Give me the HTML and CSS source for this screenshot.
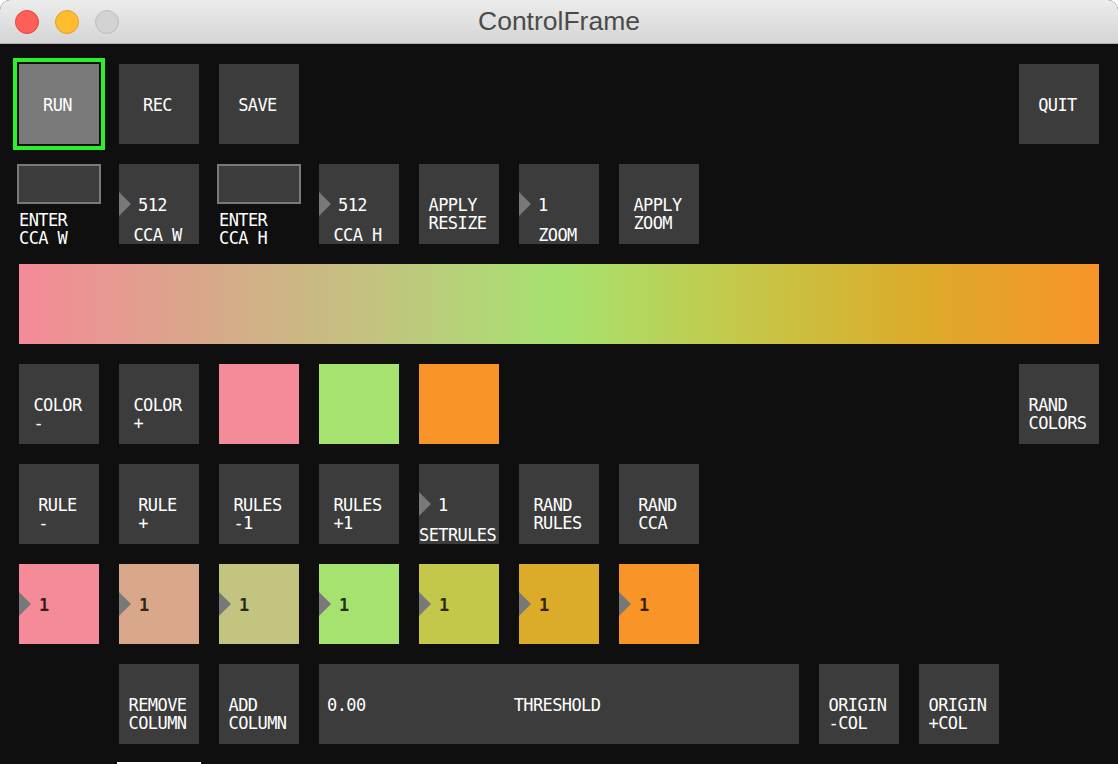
FILE: index.html
```html
<!DOCTYPE html>
<html>
<head>
<meta charset="utf-8">
<title>ControlFrame</title>
<link rel="stylesheet" href="styles.css">
</head>
<body>
<div class="window">
  <div class="titlebar">
    <div class="lights">
      <span class="light red"></span>
      <span class="light yellow"></span>
      <span class="light gray"></span>
    </div>
    <div class="title">ControlFrame</div>
  </div>
  <div class="panel">
    <!-- row 1 -->
    <div class="btn at1 active"><span class="lbl">RUN</span></div>
    <div class="btn"><span class="lbl">REC</span></div>
    <div class="btn"><span class="lbl">SAVE</span></div>
    <div class="btn at11"><span class="lbl">QUIT</span></div>

    <!-- row 2 -->
    <div class="field at1"><div class="input"></div><div class="flabel">ENTER<br>CCA W</div></div>
    <div class="num"><span class="tri"></span><div class="val">512</div><div class="cap">CCA W</div></div>
    <div class="field"><div class="input"></div><div class="flabel">ENTER<br>CCA H</div></div>
    <div class="num"><span class="tri"></span><div class="val">512</div><div class="cap">CCA H</div></div>
    <div class="btn"><span class="lbl">APPLY<br>RESIZE</span></div>
    <div class="num"><span class="tri"></span><div class="val">1</div><div class="cap">ZOOM</div></div>
    <div class="btn"><span class="lbl">APPLY<br>ZOOM</span></div>

    <!-- row 3 -->
    <div class="grad"></div>

    <!-- row 4 -->
    <div class="btn at1"><span class="lbl">COLOR<br>-</span></div>
    <div class="btn"><span class="lbl">COLOR<br>+</span></div>
    <div class="swatch pink"></div>
    <div class="swatch green"></div>
    <div class="swatch orange"></div>
    <div class="btn at11"><span class="lbl">RAND<br>COLORS</span></div>

    <!-- row 5 -->
    <div class="btn at1"><span class="lbl">RULE<br>-</span></div>
    <div class="btn"><span class="lbl">RULE<br>+</span></div>
    <div class="btn"><span class="lbl">RULES<br>-1</span></div>
    <div class="btn"><span class="lbl">RULES<br>+1</span></div>
    <div class="num"><span class="tri"></span><div class="val">1</div><div class="cap">SETRULES</div></div>
    <div class="btn"><span class="lbl">RAND<br>RULES</span></div>
    <div class="btn"><span class="lbl">RAND<br>CCA</span></div>

    <!-- row 6 -->
    <div class="rule at1 k0"><span class="tri"></span><div class="val">1</div></div>
    <div class="rule k1"><span class="tri"></span><div class="val">1</div></div>
    <div class="rule k2"><span class="tri"></span><div class="val">1</div></div>
    <div class="rule k3"><span class="tri"></span><div class="val">1</div></div>
    <div class="rule k4"><span class="tri"></span><div class="val">1</div></div>
    <div class="rule k5"><span class="tri"></span><div class="val">1</div></div>
    <div class="rule k6"><span class="tri"></span><div class="val">1</div></div>

    <!-- row 7 -->
    <div class="btn at2"><span class="lbl">REMOVE<br>COLUMN</span></div>
    <div class="btn"><span class="lbl">ADD<br>COLUMN</span></div>
    <div class="slider"><span class="sval">0.00</span><span class="slbl">THRESHOLD</span></div>
    <div class="btn"><span class="lbl">ORIGIN<br>-COL</span></div>
    <div class="btn"><span class="lbl">ORIGIN<br>+COL</span></div>

    <!-- row 8 -->
    <div class="field at2 focus"><div class="input"></div></div>
  </div>
</div>
</body>
</html>
```
FILE: styles.css
```css
* { box-sizing: border-box; margin: 0; padding: 0; }

html, body {
  width: 1118px;
  height: 764px;
  overflow: hidden;
  background: #ffffff;
}

body {
  font-family: "DejaVu Sans Mono", monospace;
}

.window {
  width: 1118px;
  height: 764px;
  background: #0f0f0f;
  border-radius: 10px 10px 0 0;
  overflow: hidden;
  display: flex;
  flex-direction: column;
}

.titlebar {
  position: relative;
  flex: none;
  height: 44px;
  background: linear-gradient(#ececec, #d5d5d5);
  border-bottom: 1px solid #b0b0b0;
  display: flex;
  align-items: center;
  justify-content: center;
}

.lights {
  position: absolute;
  left: 15px;
  top: 10px;
  display: flex;
  gap: 16px;
}

.light {
  width: 24px;
  height: 24px;
  border-radius: 50%;
  display: block;
}
.light.red { background: #fe5f57; border: 1px solid #e1463f; }
.light.yellow { background: #febc2e; border: 1px solid #dfa024; }
.light.gray { background: #d2d2d2; border: 1px solid #bdbdbd; }

.title {
  font-family: "Liberation Sans", Arial, sans-serif;
  font-size: 26.5px;
  color: #4b4b4b;
}

.panel {
  display: grid;
  grid-template-columns: repeat(11, 80px);
  grid-auto-rows: 80px;
  gap: 20px;
  padding: 20px 0 0 19px;
  color: #ffffff;
  font-size: 17px;
  line-height: 18px;
  letter-spacing: -0.6px;
}

.at1 { grid-column-start: 1; }
.at2 { grid-column-start: 2; }
.at11 { grid-column-start: 11; }

.btn {
  background: #3c3c3c;
  display: flex;
  justify-content: center;
  padding: 32px 3px 0 0;
}

.btn .lbl { text-align: left; }

.btn.active {
  background: #7a7a7a;
  outline: 4px solid #2cf02c;
  outline-offset: 2px;
}

.field .input {
  width: 84px;
  height: 40px;
  margin-left: -2px;
  border: 2px solid #7a7a7a;
  background: #3c3c3c;
}

.field .flabel {
  margin-top: 7px;
  line-height: 18px;
}

.field.focus .input {
  margin-top: -2px;
  border-color: #ffffff;
}

.num, .rule {
  position: relative;
}

.num { background: #3c3c3c; }

.tri {
  position: absolute;
  left: 0;
  top: 28px;
  width: 0;
  height: 0;
  border-style: solid;
  border-width: 12px 0 12px 12px;
  border-color: transparent transparent transparent #787878;
}

.val {
  padding: 32px 0 0 19px;
}

.cap {
  margin-top: 12px;
  padding-right: 3px;
  text-align: center;
}

.rule .val {
  padding-left: 20px;
  color: rgba(0, 0, 0, 0.8);
  font-weight: bold;
}

.grad {
  grid-column: 1 / -1;
  background: linear-gradient(to right,
    #f58a98 0%,
    #d9a78a 16.67%,
    #c2c47f 33.33%,
    #a6e270 50%,
    #c4c84a 66.67%,
    #dcab2a 83.33%,
    #f89428 100%);
}

.swatch.pink { background: #f58a98; }
.swatch.green { background: #a6e270; }
.swatch.orange { background: #f89428; }

.k0 { background: #f58a98; }
.k1 { background: #d9a78a; }
.k2 { background: #c2c47f; }
.k3 { background: #a6e270; }
.k4 { background: #c4c84a; }
.k5 { background: #dcab2a; }
.k6 { background: #f89428; }

.slider {
  grid-column: span 5;
  background: #3c3c3c;
  display: grid;
  grid-template-columns: 1fr;
  align-items: start;
  padding: 32px 0 0 8px;
}

.slider .sval,
.slider .slbl {
  grid-row: 1;
  grid-column: 1;
}

.slider .sval { justify-self: start; }
.slider .slbl { justify-self: center; margin-left: -12px; }
```
